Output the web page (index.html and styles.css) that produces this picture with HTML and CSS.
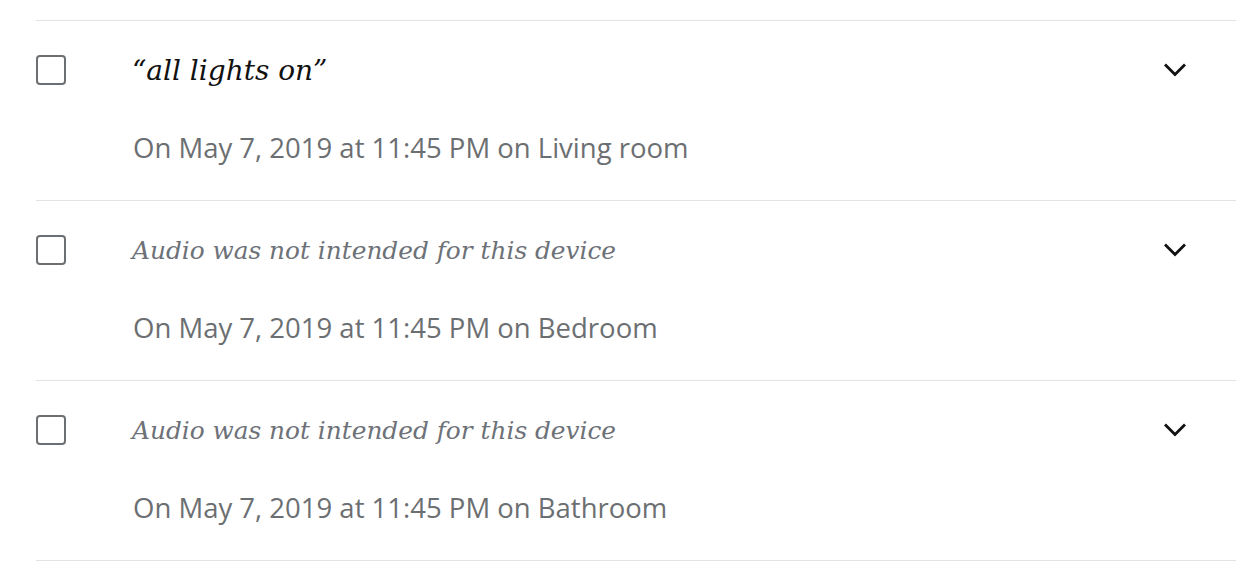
FILE: index.html
```html
<!DOCTYPE html>
<html>
<head>
<meta charset="utf-8">
<link rel="stylesheet" href="styles.css">
</head>
<body>
<ul class="list">
  <li class="item">
    <div class="head">
      <span class="check"></span>
      <span class="title">“all lights on”</span>
      <svg class="chev" viewBox="0 0 24 14" width="24" height="14"><path d="M2 1.5 L12 11.5 L22 1.5" fill="none" stroke="#111" stroke-width="2.8"/></svg>
    </div>
    <div class="meta">On May 7, 2019 at 11:45 PM on Living room</div>
  </li>
  <li class="item">
    <div class="head">
      <span class="check"></span>
      <span class="title muted">Audio was not intended for this device</span>
      <svg class="chev" viewBox="0 0 24 14" width="24" height="14"><path d="M2 1.5 L12 11.5 L22 1.5" fill="none" stroke="#111" stroke-width="2.8"/></svg>
    </div>
    <div class="meta">On May 7, 2019 at 11:45 PM on Bedroom</div>
  </li>
  <li class="item">
    <div class="head">
      <span class="check"></span>
      <span class="title muted">Audio was not intended for this device</span>
      <svg class="chev" viewBox="0 0 24 14" width="24" height="14"><path d="M2 1.5 L12 11.5 L22 1.5" fill="none" stroke="#111" stroke-width="2.8"/></svg>
    </div>
    <div class="meta">On May 7, 2019 at 11:45 PM on Bathroom</div>
  </li>
</ul>
</body>
</html>
```

FILE: styles.css
```css
html, body {
  margin: 0;
  padding: 0;
  background: #fff;
}
.list {
  list-style: none;
  margin: 0;
  padding: 20px 16px 0 36px;
}
.item {
  border-top: 1px solid #e3e3e3;
  height: 179px;
  box-sizing: content-box;
}
.item:last-child {
  border-bottom: 1px solid #e3e3e3;
}
.head {
  display: flex;
  align-items: center;
  height: 30px;
  margin-top: 34px;
}
.check {
  width: 26px;
  height: 26px;
  border: 2px solid #6c6f72;
  border-radius: 4px;
  flex: none;
}
.title {
  margin-left: 66px;
  font-family: "DejaVu Serif", serif;
  font-style: italic;
  font-size: 28px;
  color: #111;
  flex: 1;
}
.title.muted {
  font-size: 24.8px;
  color: #6d7178;
}
.chev {
  margin-right: 49px;
}
.meta {
  margin-top: 49px;
  margin-left: 97px;
  font-family: "Open Sans", sans-serif;
  font-size: 27.5px;
  color: #6c6f72;
  line-height: 1;
}
```
